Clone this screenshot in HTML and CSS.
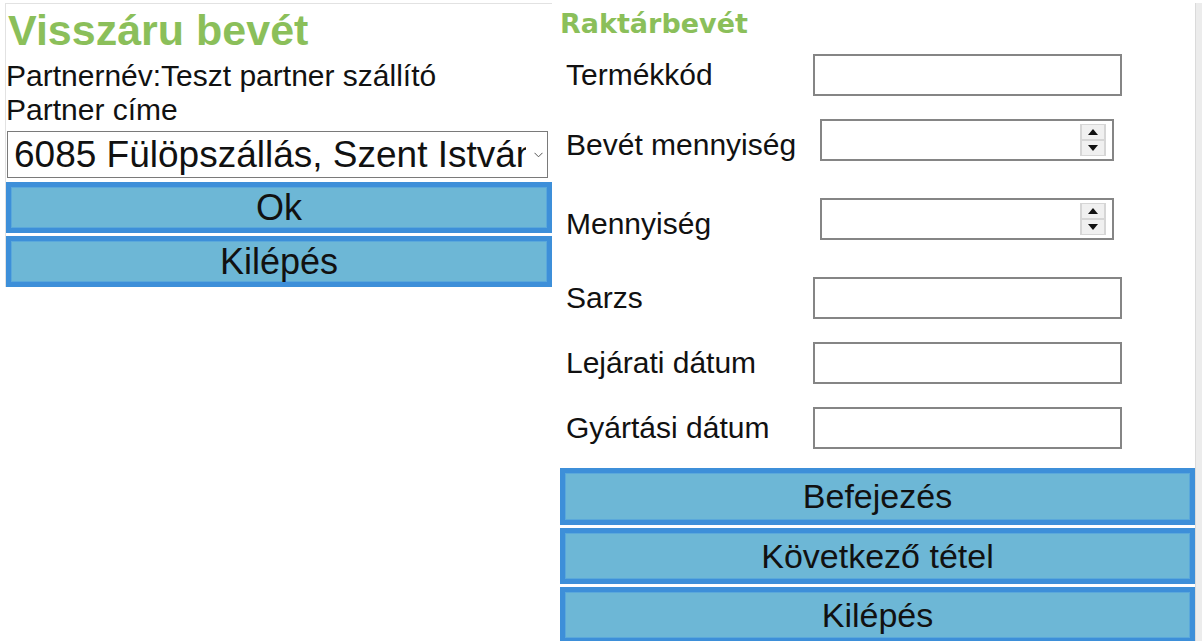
FILE: index.html
```html
<!DOCTYPE html>
<html lang="hu">
<head>
    <meta charset="UTF-8">
    <meta name="viewport" content="width=device-width, initial-scale=1.0">
    <title>Visszáru bevét</title>
    <link rel="stylesheet" href="styles.css">
</head>
<body>

    <div class="screen">

        <section class="panel-return">
            <h1 class="title">Visszáru bevét</h1>
            <div class="line">Partnernév:Teszt partner szállító</div>
            <div class="line">Partner címe</div>

            <div class="select-wrap">
                <select class="select">
                    <option>6085 Fülöpszállás, Szent István u. 4.</option>
                </select>
                <svg class="chevron" viewBox="0 0 9 6" width="9" height="6">
                    <path d="M0.5 0.8 L4.5 4.8 L8.5 0.8" fill="none" stroke="#555" stroke-width="1"/>
                </svg>
            </div>

            <button class="btn">Ok</button>
            <button class="btn">Kilépés</button>
        </section>

        <section class="panel-stock">
            <h2 class="subtitle">Raktárbevét</h2>

            <div class="fields">
                <div class="field">
                    <label class="label">Termékkód</label>
                    <input type="text" class="input">
                </div>
                <div class="field num">
                    <label class="label">Bevét mennyiség</label>
                    <div class="number">
                        <input type="number">
                        <div class="spin"><span class="up"></span><span class="down"></span></div>
                    </div>
                </div>
                <div class="field num">
                    <label class="label">Mennyiség</label>
                    <div class="number">
                        <input type="number">
                        <div class="spin"><span class="up"></span><span class="down"></span></div>
                    </div>
                </div>
                <div class="field">
                    <label class="label">Sarzs</label>
                    <input type="text" class="input">
                </div>
                <div class="field">
                    <label class="label">Lejárati dátum</label>
                    <input type="text" class="input">
                </div>
                <div class="field">
                    <label class="label">Gyártási dátum</label>
                    <input type="text" class="input">
                </div>
            </div>

            <div class="actions">
                <button class="btn big">Befejezés</button>
                <button class="btn big">Következő tétel</button>
                <button class="btn big">Kilépés</button>
            </div>
        </section>

        <div class="scrollbar"></div>

    </div>

</body>
</html>
```

FILE: styles.css
```css
body {
    margin: 0;
    font-family: "Liberation Sans", Arial, sans-serif;
    background-color: #fff;
    color: #111;
}

.screen {
    display: flex;
    width: 1202px;
    height: 641px;
    padding-top: 3px;
    box-sizing: border-box;
    overflow: hidden;
}

/* left: visszáru */

.panel-return {
    width: 547px;
    flex-shrink: 0;
    align-self: flex-start;
    margin-left: 5px;
    box-sizing: border-box;
    border-top: 1px solid #e2e2e2;
    border-left: 1px solid #e2e2e2;
}

.title {
    margin: 4px 0 7px 2px;
    font-size: 43px;
    line-height: 44px;
    font-weight: bold;
    color: #8bbf5a;
}

.line {
    font-size: 30px;
    line-height: 34px;
}

.select-wrap {
    position: relative;
    height: 47px;
    margin: 4px 4px 0 1px;
}

.select {
    -webkit-appearance: none;
    appearance: none;
    width: 100%;
    height: 47px;
    box-sizing: border-box;
    border: 1px solid #7a7a7a;
    border-radius: 0;
    background-color: #fff;
    color: #111;
    font-family: "Liberation Sans", Arial, sans-serif;
    font-size: 37px;
    padding: 0 21px 0 6px;
    outline: none;
}

.chevron {
    position: absolute;
    right: 5px;
    top: 21px;
}

.btn {
    display: block;
    width: 100%;
    height: 51px;
    margin: 3px 0 0;
    padding: 0;
    box-sizing: border-box;
    border: 5px solid #3d8fd9;
    box-shadow: inset 0 0 0 1px #5aa8db;
    background-color: #6db7d6;
    color: #111;
    font-family: "Liberation Sans", Arial, sans-serif;
    font-size: 36px;
    cursor: pointer;
}

.select-wrap + .btn {
    margin-top: 4px;
}

/* right: raktárbevét */

.panel-stock {
    flex: 1;
    padding-left: 8px;
    box-sizing: border-box;
}

.subtitle {
    margin: 6px 0 0;
    font-family: "DejaVu Sans", Verdana, sans-serif;
    font-size: 27px;
    line-height: 30px;
    font-weight: bold;
    color: #8bbf5a;
}

.fields {
    display: flex;
    flex-direction: column;
    gap: 23px;
    margin-top: 15px;
}

.field {
    display: flex;
    align-items: center;
    height: 42px;
}

.field.num {
    margin-bottom: 14px;
}

.label {
    width: 247px;
    padding-left: 6px;
    font-size: 30px;
    line-height: 34px;
    color: #111;
}

.field.num .label {
    padding-top: 10px;
}

.input {
    width: 309px;
    height: 42px;
    box-sizing: border-box;
    border: 2px solid #858585;
    padding: 0 6px;
    font-size: 24px;
    background-color: #fff;
    outline: none;
}

.number {
    display: flex;
    align-items: center;
    width: 294px;
    height: 42px;
    margin-left: 7px;
    padding-right: 6px;
    box-sizing: border-box;
    border: 2px solid #858585;
    background-color: #fff;
}

.number input {
    flex: 1;
    min-width: 0;
    height: 100%;
    border: none;
    padding: 0 6px;
    font-size: 24px;
    outline: none;
    -moz-appearance: textfield;
}

.number input::-webkit-inner-spin-button,
.number input::-webkit-outer-spin-button {
    -webkit-appearance: none;
    margin: 0;
}

.spin {
    display: flex;
    flex-direction: column;
    gap: 2px;
    width: 26px;
    height: 32px;
    padding: 1px 2px;
    box-sizing: border-box;
    background-color: #d6d6d6;
}

.spin span {
    flex: 1;
    display: flex;
    align-items: center;
    justify-content: center;
    background-color: #f0f0f0;
}

.spin span::before {
    content: "";
    border-left: 5px solid transparent;
    border-right: 5px solid transparent;
}

.spin .up::before {
    border-bottom: 6px solid #111;
}

.spin .down::before {
    border-top: 6px solid #111;
}

.actions {
    margin-top: 19px;
}

.btn.big {
    height: 56px;
    font-size: 34px;
}

.actions .btn.big:first-child {
    height: 57px;
    margin-top: 0;
}

.scrollbar {
    width: 7px;
    flex-shrink: 0;
    box-sizing: border-box;
    border-left: 1px solid #dadada;
    background-color: #ececec;
}
```
